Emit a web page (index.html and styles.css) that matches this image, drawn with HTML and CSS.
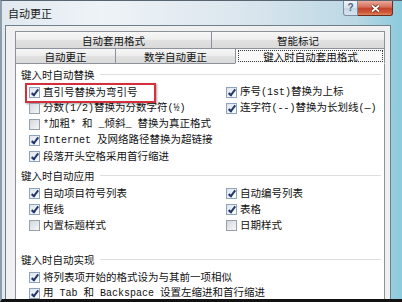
FILE: index.html
```html
<!DOCTYPE html>
<html lang="zh-CN">
<head>
  <meta charset="UTF-8" />
  <title>自动更正</title>
  <link rel="stylesheet" href="styles.css">
</head>
<body>

<div class="window">
  <div class="titlebar">
    <span class="title">自动更正</span>
    <div class="caption">
      <span class="cap-help">?</span>
      <span class="cap-close">
        <svg width="11" height="9" viewBox="0 0 11 9">
          <path d="M2 1.5 L9 7.5 M9 1.5 L2 7.5" stroke="#6a2418" stroke-width="3.2" />
          <path d="M2 1.5 L9 7.5 M9 1.5 L2 7.5" stroke="#fff" stroke-width="1.7" />
        </svg>
      </span>
    </div>
  </div>

  <div class="client">
    <div class="tab-row back">
      <div class="tab t-format">自动套用格式</div>
      <div class="tab t-smart">智能标记</div>
    </div>
    <div class="tab-row front">
      <div class="tab t-auto">自动更正</div>
      <div class="tab t-math">数学自动更正</div>
      <div class="tab t-typing sel"><span>键入时自动套用格式</span></div>
    </div>

    <div class="panel">
      <div class="grp-h">键入时自动替换</div>
      <div class="opts">
        <div class="opt marked"><span class="cb on"></span><span class="lbl">直引号替换为弯引号</span><span class="mark"></span></div>
        <div class="opt"><span class="cb on"></span><span class="lbl">序号<span class="en">(1st)</span>替换为上标</span></div>
        <div class="opt"><span class="cb"></span><span class="lbl">分数<span class="en">(1/2)</span>替换为分数字符<span class="en">(½)</span></span></div>
        <div class="opt"><span class="cb on"></span><span class="lbl">连字符<span class="en">(--)</span>替换为长划线<span class="en">(—)</span></span></div>
        <div class="opt wide"><span class="cb"></span><span class="lbl"><span class="en">*</span>加粗<span class="en">* </span>和<span class="en"> _</span>倾斜<span class="en">_ </span>替换为真正格式</span></div>
        <div class="opt wide"><span class="cb on"></span><span class="lbl"><span class="en">Internet </span>及网络路径替换为超链接</span></div>
        <div class="opt wide"><span class="cb on"></span><span class="lbl">段落开头空格采用首行缩进</span></div>
      </div>

      <div class="grp-h g2">键入时自动应用</div>
      <div class="opts">
        <div class="opt"><span class="cb on"></span><span class="lbl">自动项目符号列表</span></div>
        <div class="opt"><span class="cb on"></span><span class="lbl">自动编号列表</span></div>
        <div class="opt"><span class="cb on"></span><span class="lbl">框线</span></div>
        <div class="opt"><span class="cb on"></span><span class="lbl">表格</span></div>
        <div class="opt"><span class="cb"></span><span class="lbl">内置标题样式</span></div>
        <div class="opt"><span class="cb"></span><span class="lbl">日期样式</span></div>
      </div>

      <div class="grp-h g3">键入时自动实现</div>
      <div class="opts">
        <div class="opt wide"><span class="cb on"></span><span class="lbl">将列表项开始的格式设为与其前一项相似</span></div>
        <div class="opt wide"><span class="cb on"></span><span class="lbl">用<span class="en"> Tab </span>和<span class="en"> Backspace </span>设置左缩进和首行缩进</span></div>
      </div>
    </div>
  </div>
</div>

</body>
</html>
```

FILE: styles.css
```css
body {
  margin: 0;
  font-family: "Noto Sans CJK SC", "Noto Sans", sans-serif;
  font-size: 10.5px;
  color: #111;
}

.window {
  width: 402px;
  height: 302px;
  box-sizing: border-box;
  display: flex;
  flex-direction: column;
  overflow: hidden;
  border-top: 1px solid #56656f;
  border-left: 2px solid #8b9ea9;
  border-bottom: 3px solid #121212;
  background: linear-gradient(90deg, #e1e9f0 0%, #eef3f7 25%, #dbe6ee 60%, #bcd8e5 88%, #8ccadc 100%);
}

/* title bar */
.titlebar { height: 24px; flex: none; display: flex; }
.title { padding-left: 6px; line-height: 24px; font-size: 11px; color: #1a1a1a; }
.caption { margin-left: auto; margin-right: 9px; display: flex; height: 15px; }
.cap-help {
  width: 15px;
  box-sizing: border-box;
  border: 1px solid #7b8ea0;
  border-top: none;
  border-radius: 0 0 0 3px;
  background: linear-gradient(#eef3f8, #d8e3ec 50%, #c5d5e3 51%, #d6e5ef);
  color: #4a6782;
  font: bold 10px "Liberation Sans", sans-serif;
  line-height: 14px;
  text-align: center;
}
.cap-close {
  width: 35px;
  box-sizing: border-box;
  border: 1px solid #6b2a22;
  border-top: none;
  border-left: none;
  border-radius: 0 0 3px 0;
  background: linear-gradient(#eaa99b, #d66c58 45%, #c3422d 50%, #cd5738 80%, #e18a5c);
  display: flex;
  align-items: center;
  justify-content: center;
}

/* dialog body */
.client {
  flex: 1;
  min-height: 0;
  margin: 0 11px 0 3px;
  border: 1px solid #6f808c;
  border-bottom: none;
  background: #f0f0f0;
  padding: 5px 5px 0 9px;
  display: flex;
  flex-direction: column;
}

.tab-row { display: flex; flex: none; }
.tab {
  box-sizing: border-box;
  border: 1px solid #8d9199;
  border-bottom: none;
  margin-left: -1px;
  background: linear-gradient(#f7f7f7, #ededed 48%, #e1e1e1 52%, #dadada);
  display: flex;
  align-items: center;
  justify-content: center;
  white-space: nowrap;
}
.tab:first-child { margin-left: 0; }
.back .tab { height: 17px; }
.front .tab { height: 16px; border-bottom: 1px solid #8d9199; }

.t-format { width: 197px; }
.t-smart { width: 174px; }
.t-auto { width: 101px; }
.t-math { width: 121px; }
.t-typing { width: 150px; }

.tab.sel {
  background: #f9f9f9;
  border-bottom-color: #fff;
  padding: 1px 1px 1px 2px;
}
.tab.sel span {
  flex: 1;
  align-self: stretch;
  border: 1px dotted #3a3a3a;
  display: flex;
  align-items: center;
  justify-content: center;
}

.panel {
  flex: 1;
  min-height: 0;
  background: #fff;
  border: 1px solid #8d9199;
  border-top: none;
  border-bottom: none;
  padding: 2px 3px 0 0;
}

.grp-h {
  display: flex;
  align-items: center;
  height: 16px;
  padding-left: 5px;
  white-space: nowrap;
}
.grp-h::after {
  content: "";
  flex: 1;
  margin-left: 5px;
  border-top: 1px solid #dcdfe2;
}
.g2 { margin-top: 3px; }
.g3 { margin-top: 18px; }

.opts {
  display: grid;
  grid-template-columns: 197px 1fr;
  grid-auto-rows: 16px;
  padding-left: 13px;
  margin-top: 2px;
}

.opt {
  display: flex;
  align-items: center;
  gap: 3px;
  white-space: nowrap;
}
.wide { grid-column: 1 / -1; }
.lbl { line-height: 14px; }
.en { font-family: "Liberation Mono", monospace; font-size: 10px; white-space: pre; }

.cb {
  width: 11px;
  height: 11px;
  box-sizing: border-box;
  flex: none;
  position: relative;
  border: 1px solid #97a1ab;
  background: linear-gradient(135deg, #d3d8de, #f6f7f8);
}
.cb.on {
  border-color: #8ea3bd;
  background: linear-gradient(135deg, #dde5ee, #fbfcfd);
}
.cb.on::after {
  content: "";
  position: absolute;
  left: 3px;
  top: 0;
  width: 2px;
  height: 6px;
  border: solid #24386c;
  border-width: 0 2px 2px 0;
  transform: rotate(38deg);
}

/* red annotation box */
.marked { position: relative; }
.mark {
  position: absolute;
  left: -4px;
  top: -1px;
  width: 131px;
  height: 20px;
  box-sizing: border-box;
  border: 2px solid #d3303c;
  box-shadow: 1px 1px 2px rgba(0, 0, 0, 0.35);
}
```
